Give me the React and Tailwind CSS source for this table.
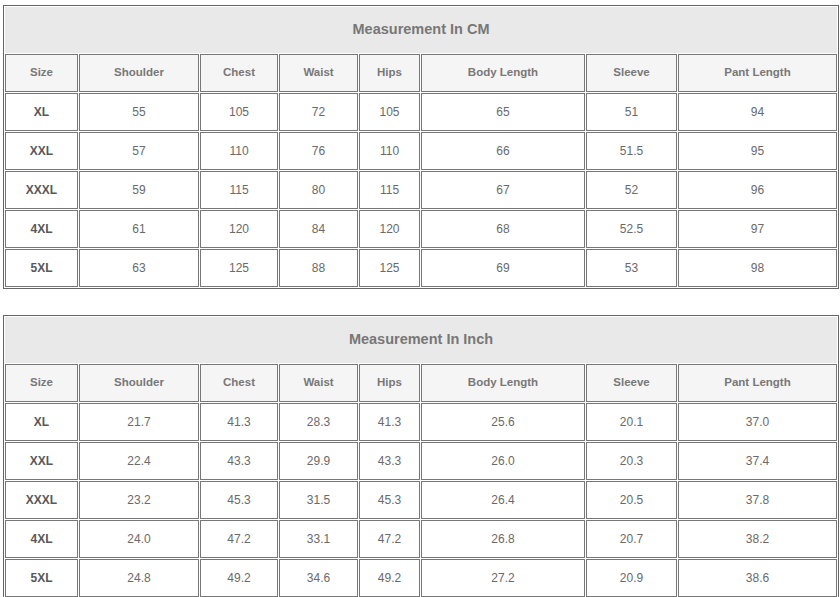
import React from "react";

const headers = ["Size", "Shoulder", "Chest", "Waist", "Hips", "Body Length", "Sleeve", "Pant Length"];

const cmRows = [
  ["XL", "55", "105", "72", "105", "65", "51", "94"],
  ["XXL", "57", "110", "76", "110", "66", "51.5", "95"],
  ["XXXL", "59", "115", "80", "115", "67", "52", "96"],
  ["4XL", "61", "120", "84", "120", "68", "52.5", "97"],
  ["5XL", "63", "125", "88", "125", "69", "53", "98"],
];

const inchRows = [
  ["XL", "21.7", "41.3", "28.3", "41.3", "25.6", "20.1", "37.0"],
  ["XXL", "22.4", "43.3", "29.9", "43.3", "26.0", "20.3", "37.4"],
  ["XXXL", "23.2", "45.3", "31.5", "45.3", "26.4", "20.5", "37.8"],
  ["4XL", "24.0", "47.2", "33.1", "47.2", "26.8", "20.7", "38.2"],
  ["5XL", "24.8", "49.2", "34.6", "49.2", "27.2", "20.9", "38.6"],
];

function Table({ title, rows, className }) {
  return (
    <div
      className={
        "ml-[3px] w-[836px] border border-[#666666] bg-white p-px " + className
      }
    >
      <div className="grid grid-cols-[73px_120px_78px_79px_61px_164px_91px_159px] gap-px">
        <div className="col-span-8 flex h-[46px] items-center justify-center bg-[#e9e9e9] text-[14.5px] font-bold text-[#777777]">
          {title}
        </div>
        {headers.map((h) => (
          <div
            key={h}
            className="flex h-[38px] items-center justify-center border border-[#777777] bg-[#f5f5f5] text-[11.5px] font-bold text-[#787878]"
          >
            {h}
          </div>
        ))}
        {rows.map((r, ri) =>
          r.map((v, ci) => (
            <div
              key={ri + "-" + ci}
              className={
                ci === 0
                  ? "flex h-[38px] items-center justify-center border border-[#777777] bg-white text-[12px] font-bold text-[#585858]"
                  : "flex h-[38px] items-center justify-center border border-[#777777] bg-white text-[12px] text-[#6a6a6a]"
              }
            >
              {v}
            </div>
          ))
        )}
      </div>
    </div>
  );
}

export default function App() {
  return (
    <div className="h-[597px] w-[840px] overflow-hidden bg-white pt-[5px] font-['Liberation_Sans',Arial,sans-serif]">
      <Table title="Measurement In CM" rows={cmRows} className="" />
      <Table title="Measurement In Inch" rows={inchRows} className="mt-[26px]" />
    </div>
  );
}
